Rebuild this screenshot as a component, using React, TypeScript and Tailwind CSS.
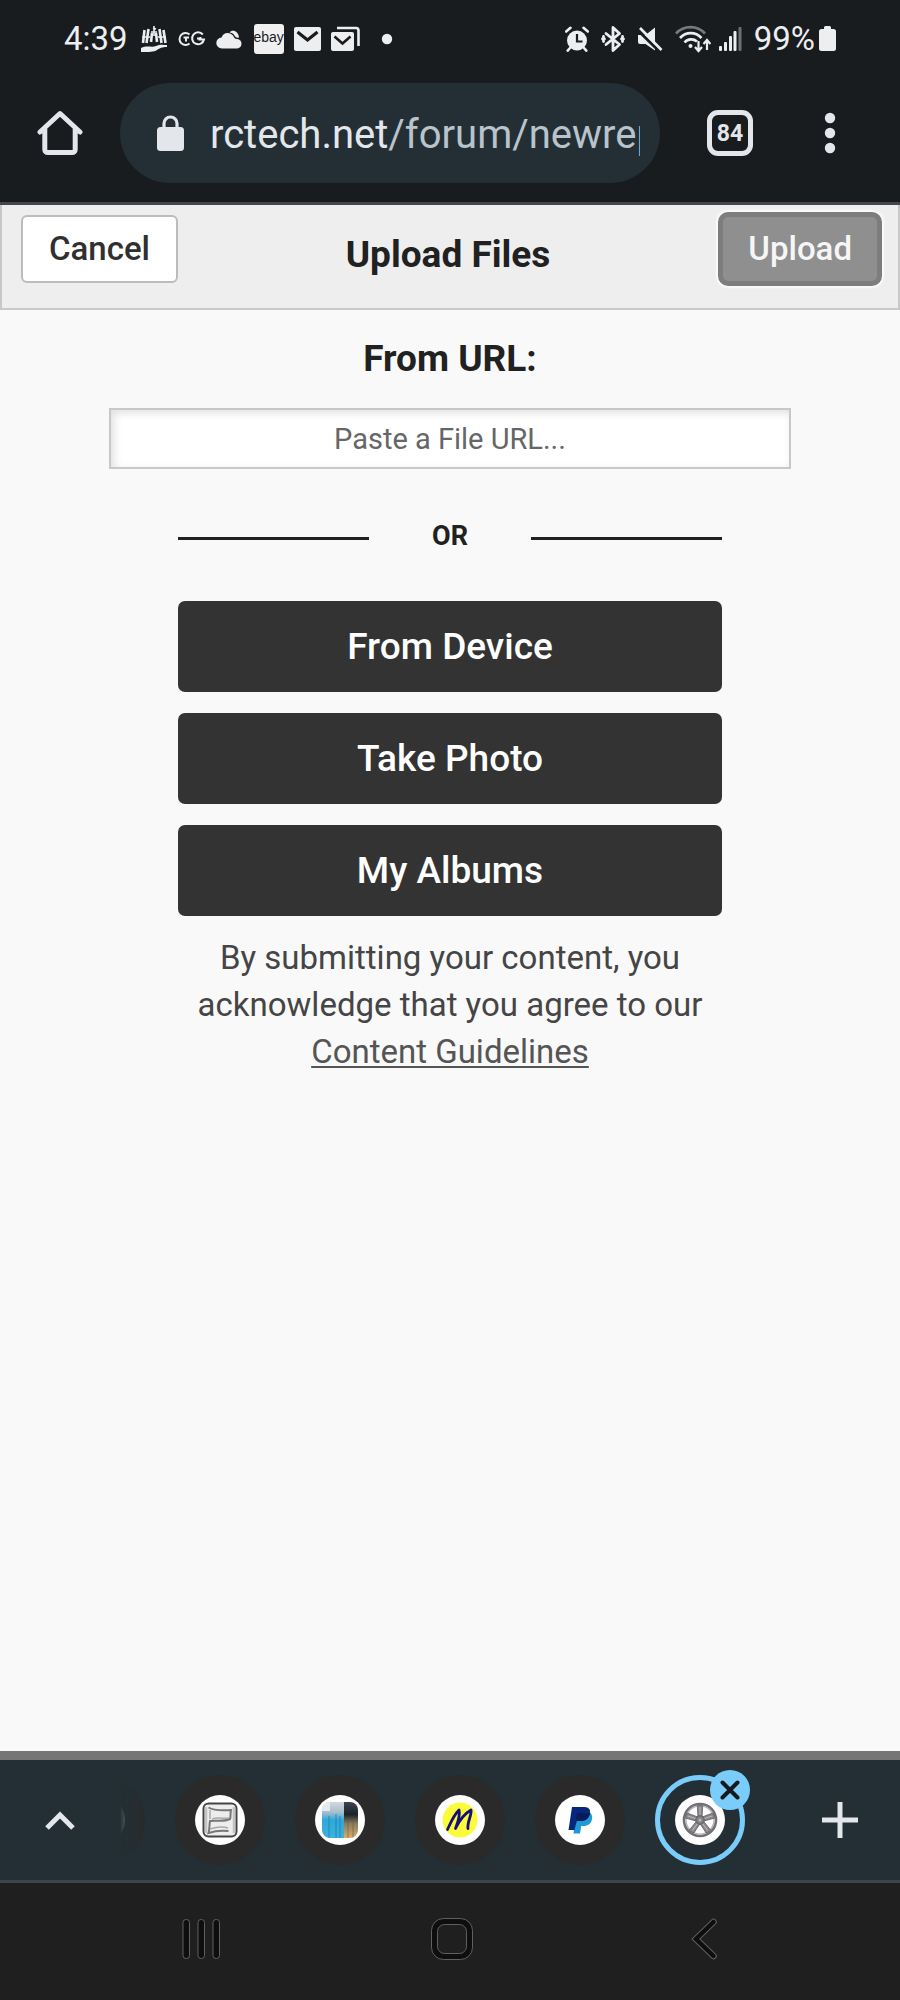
import React from "react";

function NotificationIcons() {
  return (
    <div className="flex items-center gap-[10px] text-[#eceef0]">
      <svg width="28" height="30" viewBox="0 0 28 30" fill="none" stroke="currentColor" aria-hidden="true">
        <path d="M4.500 6 3 19M8.500 5 6.500 19M12 9l-1 9M23.500 6 25.500 19M19.500 5 21.500 19M16 9l1 9" strokeWidth="2.600" />
        <path d="M2 13h8M18 13h8M14 2v10M11 8h6M13 4l3 1" strokeWidth="1.600" />
        <path d="M1 24c6-3 11 0 15-2s8-1 11-1v2c-5 0-7 1-10 3s-8 2-16 2z" fill="currentColor" stroke="none" />
      </svg>
      <svg width="28" height="30" viewBox="0 0 28 30" fill="none" stroke="currentColor" strokeWidth="2" aria-hidden="true">
        <path d="M11.500 10.500A6 6 0 1 0 11.500 19.500M24.800 10.500A6 6 0 1 0 26 15.500H20.500M8 12.500v5M5.500 13.500H11M19 14.500h2.500M22.500 13v2.500" />
      </svg>
      <svg width="28" height="30" viewBox="0 0 28 30" fill="currentColor" aria-hidden="true">
        <path d="M6 24.500a5.500 5.500 0 0 1-.4-11A6.500 6.500 0 0 1 17 11.500c1.200 2.500 2.300 3.700 4.200 3.500a4.800 4.800 0 0 1 .3 9.500z" />
        <path d="M13.500 8.500c2.800-3.500 9-1.500 9.500 5-2.200.8-3.600-.2-4.700-2.200-1.100-1.800-2.700-2.800-4.800-2.800z" />
      </svg>
      <span className="flex size-[30px] items-center justify-center rounded-[3px] bg-[#f0f0f0] pb-1 font-['Liberation_Sans',sans-serif] text-[14px] leading-none text-[#1a1c1f]">
        ebay
      </span>
      <svg width="27" height="30" viewBox="0 0 27 30" aria-hidden="true">
        <rect x="0" y="3" width="27" height="24" rx="2" fill="currentColor" />
        <path d="m3.500 8 10 8 10-8" fill="none" stroke="#191c1f" strokeWidth="3.200" />
      </svg>
      <svg width="29" height="30" viewBox="0 0 29 30" aria-hidden="true">
        <path d="M6 4h19a2.500 2.500 0 0 1 2.500 2.500V22" fill="none" stroke="currentColor" strokeWidth="2.600" />
        <rect x="0" y="8" width="23" height="19" rx="2" fill="currentColor" />
        <path d="m3.500 12.500 8 7 8-7" fill="none" stroke="#191c1f" strokeWidth="2.600" />
      </svg>
      <svg width="34" height="30" viewBox="0 0 34 30" fill="currentColor" aria-hidden="true">
        <circle cx="17" cy="15" r="5.200" />
      </svg>
    </div>
  );
}

function SystemIcons() {
  return (
    <div className="flex items-center gap-3 text-[#eceef0]">
      <svg width="24" height="30" viewBox="0 0 24 30" fill="none" stroke="currentColor" aria-hidden="true">
        <circle cx="12" cy="16.500" r="10" fill="currentColor" stroke="none" />
        <path d="m1.200 7.500 4.300-3.700M22.800 7.500l-4.300-3.700M5 24l-2.300 2.600M19 24l2.300 2.600" strokeWidth="2.600" strokeLinecap="round" />
        <path d="M12 10v7.500h5.500" stroke="#191c1f" strokeWidth="2.200" />
      </svg>
      <svg width="24" height="30" viewBox="0 0 24 30" fill="none" stroke="currentColor" strokeWidth="2.800" strokeLinejoin="round" strokeLinecap="round" aria-hidden="true">
        <path d="m5 9.500 13.500 11L12 26.500v-23l6.500 6L5 20.500M2.500 12.500v5M21.500 12.500v5M1.500 15h2M20.500 15h2" />
      </svg>
      <svg width="26" height="30" viewBox="0 0 26 30" aria-hidden="true">
        <path d="M1 11h7.500L18 3.500v23L8.500 20H3a2 2 0 0 1-2-2z" fill="currentColor" />
        <path d="M0 5.500 23 28" stroke="#191c1f" strokeWidth="3" />
        <path d="m3 4 21.500 22" stroke="currentColor" strokeWidth="2.600" />
      </svg>
      <div className="flex items-center gap-2">
        <svg width="36" height="30" viewBox="0 0 36 30" fill="none" stroke="currentColor" strokeWidth="2.600" aria-hidden="true">
          <path d="M1 9.500c8-8.500 21-8.500 29 0" opacity=".45" />
          <path d="M5 14c6-6.500 15.500-6.500 21.500 0M9.500 18.500c3.500-4 9-4 12.500-1" />
          <circle cx="15.500" cy="22" r="2" fill="currentColor" stroke="none" />
          <path d="M23.500 17v9M20 23l3.500 4 3.500-4M32 26V16.500M28.500 20l3.500-4 3.500 4" strokeWidth="2.200" />
        </svg>
        <svg width="23" height="30" viewBox="0 0 23 30" fill="currentColor" aria-hidden="true">
          <rect x="0" y="22" width="3" height="5" rx="1" />
          <rect x="5" y="18" width="3" height="9" rx="1" />
          <rect x="10" y="12" width="3" height="15" rx="1" />
          <rect x="14.500" y="7" width="3" height="20" rx="1" />
          <rect x="19.500" y="3" width="3" height="24" rx="1" opacity=".4" />
        </svg>
      </div>
      <div className="flex items-center gap-1">
        <span className="text-[33px] leading-10">99%</span>
        <svg width="17" height="30" viewBox="0 0 17 30" fill="currentColor" aria-hidden="true">
          <path d="M5 3.500A1.500 1.500 0 0 1 6.500 2h4A1.500 1.500 0 0 1 12 3.500V5h2.500A2.500 2.500 0 0 1 17 7.500v17a2.500 2.500 0 0 1-2.500 2.500h-12A2.500 2.500 0 0 1 0 24.500v-17A2.500 2.500 0 0 1 2.500 5H5z" />
        </svg>
      </div>
    </div>
  );
}

function BrowserBar() {
  return (
    <div className="flex h-[126px] items-center border-b-3 border-[#43474c] pt-[5px] pb-5">
      <button aria-label="Home" className="flex w-[120px] shrink-0 justify-center text-[#e3e6ea]">
        <svg width="46" height="46" viewBox="0 0 46 46" fill="none" stroke="currentColor" strokeWidth="5" strokeLinejoin="round" strokeLinecap="round" aria-hidden="true">
          <path d="M3 22 23 3.500 43 22M7.800 19v20.500a3 3 0 0 0 3 3h24.400a3 3 0 0 0 3-3V19" />
        </svg>
      </button>
      <button
        aria-label="Edit address"
        className="flex h-[100px] min-w-0 flex-1 items-center gap-[26px] rounded-full bg-[#232f35] pr-5 pl-[37px] text-left"
      >
        <svg width="27" height="36" viewBox="0 0 27 36" className="shrink-0 text-[#e3e6ea]" aria-hidden="true">
          <path d="M7 14V8.500a6.500 6.500 0 0 1 13 0V14" fill="none" stroke="currentColor" strokeWidth="3.200" />
          <rect y="12" width="27" height="24" rx="3.500" fill="currentColor" />
        </svg>
        <span className="min-w-0 flex-1 overflow-hidden pt-1 text-[40px] leading-[52px] whitespace-nowrap text-[#b9c3cb]">
          <span className="text-[#e3e7ec]">rctech.net</span>/forum/newrep
        </span>
      </button>
      <div className="flex w-[240px] shrink-0 items-center">
        <button aria-label="Switch tabs, 84 open" className="flex flex-1 justify-center pl-10">
          <span className="flex size-[46px] items-center justify-center rounded-[11px] border-5 border-[#e3e6ea] text-[23px] leading-none font-bold text-[#e3e6ea]">
            84
          </span>
        </button>
        <button aria-label="Menu" className="flex w-[140px] justify-center text-[#e3e6ea]">
          <svg width="12" height="42" viewBox="0 0 12 42" fill="currentColor" aria-hidden="true">
            <circle cx="6" cy="6" r="5.200" />
            <circle cx="6" cy="21" r="5.200" />
            <circle cx="6" cy="36" r="5.200" />
          </svg>
        </button>
      </div>
    </div>
  );
}

function UploadPage() {
  const sources = ["From Device", "Take Photo", "My Albums"];
  return (
    <main className="flex flex-1 flex-col bg-[#f9f9f9]">
      <header className="grid h-[105px] grid-cols-[1fr_auto_1fr] items-start border-x-2 border-b-2 border-[#c8c8c8] bg-[#eeeeee] px-4 pt-[7px]">
        <button className="mt-[3px] ml-[3px] h-[68px] justify-self-start rounded-md border-2 border-[#bcbcbc] bg-white px-[26px] text-[33px] leading-10 font-medium text-[#303030]">
          Cancel
        </button>
        <h1 className="pt-[18px] pr-1 text-[37px] leading-[50px] font-bold text-[#212121]">Upload Files</h1>
        <button className="h-[74px] justify-self-end rounded-[10px] border-5 border-[#7d7d7d] bg-[#8f8f8f] px-[25px] text-[33px] leading-10 font-medium text-[#f6f6f6] shadow-[0_0_2px_2px_#fafafa]">
          Upload
        </button>
      </header>

      <form className="flex flex-col px-[109px] pt-6" onSubmit={(e) => e.preventDefault()}>
        <label htmlFor="file-url" className="text-center text-[37px] leading-[50px] font-bold text-[#212121]">
          From URL:
        </label>
        <input
          id="file-url"
          type="url"
          placeholder="Paste a File URL..."
          className="mt-6 h-[61px] w-full border-2 border-[#c8c8c8] bg-white text-center text-[29px] text-[#303030] shadow-[inset_3px_3px_8px_#e0e0e0] outline-none placeholder:text-[#666666]"
        />

        <div className="flex flex-col px-[69px]">
          <div className="mt-[47px] flex h-10 items-center">
            <span className="mt-[5px] h-[3px] flex-1 bg-[#212121]" />
            <span className="w-[162px] text-center text-[27px] leading-10 font-bold text-[#212121]">OR</span>
            <span className="mt-[5px] h-[3px] flex-1 bg-[#212121]" />
          </div>

          <div className="mt-[45px] flex flex-col gap-[21px]">
            {sources.map((source) => (
              <button
                key={source}
                type="button"
                className="h-[91px] rounded-[7px] bg-[#333333] text-[37px] leading-[50px] font-medium text-white"
              >
                {source}
              </button>
            ))}
          </div>

          <p className="mt-[18px] text-center text-[33px] leading-[47px] text-[#454545]">
            By submitting your content, you acknowledge that you agree to our{" "}
            <a href="#guidelines" className="text-[#555555] underline decoration-2 underline-offset-3">
              Content Guidelines
            </a>
          </p>
        </div>
      </form>
    </main>
  );
}

function SilverIcon() {
  return (
    <svg width="36" height="36" viewBox="0 0 36 36" fill="none" aria-hidden="true">
      <rect x="1.500" y="1.500" width="33" height="33" rx="5" fill="#ededed" stroke="#454545" strokeWidth="2" />
      <path d="M4 5v26M32 5v26" stroke="#c4c4c4" strokeWidth="2.500" />
      <path d="M6.500 5.500c7 4 15 3 22.500 2.500-1 4 0 7-1 9-6 3-13 1-20 2-1 4 0 8-1.500 12 6-2 12-3 20-2" stroke="#777777" strokeWidth="2" />
      <path d="M8 8v9M10 17c6-2 12 0 17-1M8 27c6-2 12-3 18-1" stroke="#aaaaaa" strokeWidth="1.500" />
    </svg>
  );
}

function PhotoIcon() {
  return (
    <svg width="36" height="36" viewBox="0 0 36 36" aria-hidden="true">
      <defs>
        <linearGradient id="photo-left" x1="0" y1="0" x2="0" y2="1">
          <stop offset="0" stopColor="#d3d8dc" />
          <stop offset=".28" stopColor="#a9bfcc" />
          <stop offset=".5" stopColor="#2fa7d8" />
          <stop offset="1" stopColor="#3fb2dc" />
        </linearGradient>
        <linearGradient id="photo-right" x1="0" y1="0" x2="0" y2="1">
          <stop offset="0" stopColor="#3c4450" />
          <stop offset=".35" stopColor="#1d2229" />
          <stop offset=".6" stopColor="#8b7b60" />
          <stop offset="1" stopColor="#d9ae68" />
        </linearGradient>
        <clipPath id="photo-clip">
          <rect width="36" height="36" rx="8" />
        </clipPath>
      </defs>
      <g clipPath="url(#photo-clip)">
        <rect width="22" height="36" fill="url(#photo-left)" />
        <rect x="22" width="14" height="36" fill="url(#photo-right)" />
        <rect width="8" height="9" fill="#e4e9ee" />
        <path d="M7 14v22M14 12v24M18 14v22" stroke="#1580b4" strokeWidth="1.500" opacity=".5" />
        <path d="M26 18v18M31 18v18" stroke="#6a5a3c" strokeWidth="1.200" opacity=".5" />
      </g>
    </svg>
  );
}

function ScriptMIcon() {
  return (
    <svg width="36" height="36" viewBox="0 0 36 36" fill="none" aria-hidden="true">
      <circle cx="18" cy="18" r="17.500" fill="#fbfb3c" />
      <path d="M5.500 27.500C9 20 11.500 13.500 17 8c1.500 5-1 12-3.500 18.500C17 19 22 12 29 8c1 5-4 12-3 18.500" stroke="#150f7a" strokeWidth="2.800" strokeLinecap="round" strokeLinejoin="round" />
    </svg>
  );
}

function PayPalIcon() {
  return (
    <svg width="36" height="36" viewBox="0 0 36 36" aria-hidden="true">
      <path d="M13.500 11h15c2 2 2.200 5 1 8-1.400 3.600-4.500 5-8 5h-2.200L18 31.500h-6.500z" fill="#1f9ad6" />
      <path d="M10 5h12.500c4.500 0 6.500 3 5.300 7.300-1.200 4.400-4.500 6.700-9 6.700h-4.200L12.500 28H6.500z" fill="#06277d" />
      <path d="M14.800 11h13.100c-.6 5.500-4.500 8-9.100 8h-4.200L13.800 23z" fill="#061c5c" />
    </svg>
  );
}

function WheelIcon() {
  return (
    <svg width="36" height="36" viewBox="0 0 36 36" fill="none" aria-hidden="true">
      <circle cx="18" cy="18" r="16" stroke="#737073" strokeWidth="2.600" />
      <circle cx="18" cy="18" r="14" stroke="#b0adb0" strokeWidth="1.200" />
      {[0, 72, 144, 216, 288].map((angle) => (
        <g key={angle} transform={`rotate(${angle} 18 18)`}>
          <path d="M16 17 15.300 3.500h5.400L20 17z" fill="#8a878a" stroke="#656265" strokeWidth=".8" />
          <path d="M18 5v10" stroke="#b9b6b9" strokeWidth="1" />
        </g>
      ))}
      <circle cx="18" cy="18" r="4.200" fill="#858285" stroke="#5c595c" />
      <circle cx="18" cy="18" r="1.500" fill="#bbb8bb" />
    </svg>
  );
}

function TabStrip() {
  const tabs = [
    { name: "Previous tab", icon: null },
    { name: "Silver tab", icon: <SilverIcon /> },
    { name: "Photo tab", icon: <PhotoIcon /> },
    { name: "M tab", icon: <ScriptMIcon /> },
    { name: "PayPal tab", icon: <PayPalIcon /> },
  ];
  return (
    <div className="flex h-[132px] border-t-9 border-b-3 border-t-[#767676] border-b-[#3a464c] bg-[#232f35] text-[#e3e6ea]">
      <button aria-label="Show all tabs in group" className="flex w-[120px] shrink-0 items-center justify-center">
        <svg width="32" height="22" viewBox="0 0 32 22" fill="none" stroke="currentColor" strokeWidth="5" aria-hidden="true">
          <path d="M3 19 16 6l13 13" />
        </svg>
      </button>
      <div className="flex min-w-0 flex-1 items-center justify-end gap-[30px] overflow-hidden [mask-image:linear-gradient(to_right,transparent,black_30px)] pr-[35px]">
        {tabs.map((tab) => (
          <button
            key={tab.name}
            aria-label={tab.name}
            className="flex size-[90px] shrink-0 items-center justify-center rounded-full bg-[#2a2a2a]"
          >
            {tab.icon ? (
              <span className="flex size-[50px] items-center justify-center rounded-full bg-white">{tab.icon}</span>
            ) : (
              <span className="size-[50px] rounded-full bg-white" />
            )}
          </button>
        ))}
        <div className="relative flex size-[90px] shrink-0 items-center justify-center rounded-full border-5 border-[#7acdfa]">
          <span className="flex size-[50px] items-center justify-center rounded-full bg-white">
            <WheelIcon />
          </span>
          <button
            aria-label="Close tab"
            className="absolute -top-[10px] -right-[10px] flex size-10 items-center justify-center rounded-full bg-[#7acdfa] text-[#14191c]"
          >
            <svg width="20" height="20" viewBox="0 0 20 20" stroke="currentColor" strokeWidth="4" strokeLinecap="round" aria-hidden="true">
              <path d="m2.500 2.500 15 15M17.500 2.500l-15 15" />
            </svg>
          </button>
        </div>
      </div>
      <button aria-label="New tab" className="flex w-[120px] shrink-0 items-center justify-center">
        <svg width="36" height="36" viewBox="0 0 36 36" stroke="currentColor" strokeWidth="5" aria-hidden="true">
          <path d="M18 0v36M0 18h36" />
        </svg>
      </button>
    </div>
  );
}

function NavigationBar() {
  return (
    <nav className="grid h-[117px] grid-cols-3 items-center justify-items-center bg-[#1f1f1f] pr-[70px] pb-[5px] pl-[75px]">
      <button aria-label="Recent apps">
        <svg width="40" height="42" viewBox="0 0 40 42" fill="#0e0e0e" stroke="#606060" aria-hidden="true">
          <rect x="2" y="1.500" width="6.500" height="39" rx="3" />
          <rect x="17" y="1.500" width="6.500" height="39" rx="3" />
          <rect x="32" y="1.500" width="6.500" height="39" rx="3" />
        </svg>
      </button>
      <button aria-label="Home screen">
        <svg width="44" height="44" viewBox="0 0 44 44" stroke="#606060" aria-hidden="true">
          <rect x="1.500" y="1.500" width="41" height="41" rx="12" fill="#0e0e0e" />
          <rect x="7.500" y="7.500" width="29" height="29" rx="7" fill="#1f1f1f" />
        </svg>
      </button>
      <button aria-label="Back">
        <svg width="26" height="42" viewBox="0 0 26 42" fill="none" strokeLinecap="round" strokeLinejoin="miter" aria-hidden="true">
          <path d="M22.500 4 5 21l17.500 17" stroke="#606060" strokeWidth="6.500" />
          <path d="M22.500 4 5 21l17.500 17" stroke="#0e0e0e" strokeWidth="4.500" />
        </svg>
      </button>
    </nav>
  );
}

export default function App() {
  return (
    <div className="flex min-h-screen flex-col bg-[#191c1f] font-[Roboto,sans-serif]">
      <div className="flex h-[79px] items-center justify-between px-16 pb-0.5 text-[#eceef0]">
        <div className="flex items-center gap-3">
          <span className="text-[33px] leading-10">4:39</span>
          <NotificationIcons />
        </div>
        <SystemIcons />
      </div>
      <BrowserBar />
      <UploadPage />
      <TabStrip />
      <NavigationBar />
    </div>
  );
}
